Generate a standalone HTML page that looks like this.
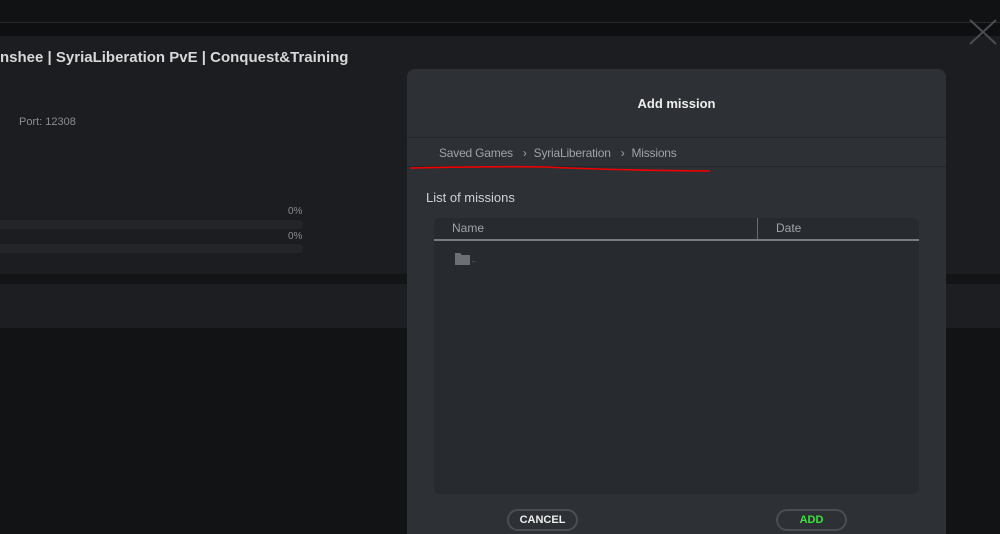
<!DOCTYPE html>
<html><head><style>
*{margin:0;padding:0;box-sizing:border-box}
html,body{width:1000px;height:534px;overflow:hidden}
body{background:#111315;font-family:"Liberation Sans","DejaVu Sans",sans-serif;position:relative}
.a{position:absolute}
</style></head><body>
<div class="a" style="left:0;top:0;width:1000px;height:22px;background:#101214"></div>
<div class="a" style="left:0;top:22px;width:1000px;height:1px;background:#26292d"></div>
<div class="a" style="left:0;top:23px;width:1000px;height:13px;background:#0d0f11"></div>
<div class="a" style="left:0;top:36px;width:1000px;height:238px;background:#1b1d20"></div>
<div class="a" style="left:0;top:274px;width:1000px;height:10px;background:#121416"></div>
<div class="a" style="left:0;top:284px;width:1000px;height:44px;background:#1c1e21"></div>
<svg class="a" style="left:968px;top:18px" width="32" height="28"><path d="M2 2 L28 26 M28 2 L2 26" stroke="#4a4d51" stroke-width="2"/></svg>
<div class="a" style="left:0;top:49px;font-size:15px;font-weight:bold;color:#d8d8d8;white-space:nowrap">nshee | SyriaLiberation PvE | Conquest&amp;Training</div>
<div class="a" style="left:19px;top:116px;font-size:11px;color:#8a8c8e">Port: 12308</div>
<div class="a" style="left:288px;top:206px;font-size:10px;color:#8a8c8e">0%</div>
<div class="a" style="left:0;top:220px;width:303px;height:9px;background:#232529;border-radius:0 4px 4px 0"></div>
<div class="a" style="left:288px;top:231px;font-size:10px;color:#8a8c8e">0%</div>
<div class="a" style="left:0;top:244px;width:303px;height:9px;background:#232529;border-radius:0 4px 4px 0"></div>

<div class="a" style="left:407px;top:69px;width:539px;height:465px;background:#2d3035;border-radius:8px 8px 0 0"></div>
<div class="a" style="left:407px;top:96px;width:539px;text-align:center;font-size:13px;font-weight:bold;color:#eee">Add mission</div>
<div class="a" style="left:407px;top:137px;width:539px;height:1px;background:#23262a"></div>
<div class="a" style="left:407px;top:166px;width:539px;height:1px;background:#23262a"></div>
<div class="a" style="left:439px;top:146px;font-size:12px;color:#a0a3a7;white-space:nowrap;letter-spacing:-0.2px">Saved Games<span style="margin:0 7px 0 10px">›</span>SyriaLiberation<span style="margin:0 7px 0 10px">›</span>Missions</div>
<svg class="a" style="left:405px;top:164px" width="310" height="12"><path d="M5 4 Q100 2 140 3 Q200 6 305 7" stroke="#e00" stroke-width="1.6" fill="none"/></svg>
<div class="a" style="left:426px;top:190px;font-size:13px;color:#d0d2d4">List of missions</div>
<div class="a" style="left:434px;top:218px;width:485px;height:276px;background:#272a2f;border-radius:6px"></div>
<div class="a" style="left:434px;top:239px;width:485px;height:2px;background:#7a7d80"></div>
<div class="a" style="left:757px;top:218px;width:1px;height:21px;background:#6a6d70"></div>
<div class="a" style="left:452px;top:221px;font-size:12px;color:#a0a3a7">Name</div>
<div class="a" style="left:776px;top:221px;font-size:12px;color:#a0a3a7">Date</div>
<svg class="a" style="left:455px;top:252px" width="16" height="13"><path d="M0 1 H5 L7 3 H15 V13 H0 Z" fill="#6c6f73"/></svg>
<div class="a" style="left:471px;top:254px;font-size:9px;color:#6c6f73">..</div>
<div class="a" style="left:507px;top:509px;width:71px;height:22px;border:2px solid #4a4d52;border-radius:11px;text-align:center;font-size:11px;font-weight:bold;color:#eee;line-height:18px">CANCEL</div>
<div class="a" style="left:776px;top:509px;width:71px;height:22px;border:2px solid #4a4d52;border-radius:11px;text-align:center;font-size:11px;font-weight:bold;color:#3ee23e;line-height:18px">ADD</div>
</body></html>
